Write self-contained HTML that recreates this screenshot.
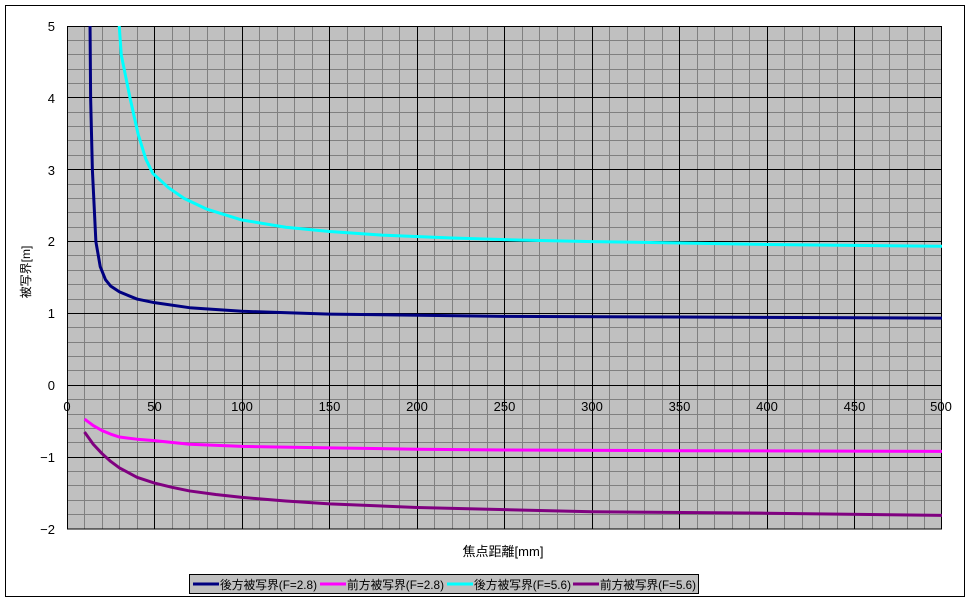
<!DOCTYPE html>
<html><head><meta charset="utf-8"><style>
html,body{margin:0;padding:0;background:#fff;width:970px;height:604px;overflow:hidden}
svg{display:block;font-family:"Liberation Sans","Noto Sans CJK JP",sans-serif}
</style></head><body>
<svg width="970" height="604" viewBox="0 0 970 604" xmlns="http://www.w3.org/2000/svg">
<defs>
<clipPath id="cp"><rect x="67" y="26" width="875" height="503"/></clipPath>
</defs>
<rect x="5.5" y="5.5" width="959" height="591" fill="#fff" stroke="#000" stroke-width="1"/>
<rect x="67" y="26" width="875" height="503" fill="#c0c0c0"/>
<g stroke="#808080" stroke-width="1" fill="none">
<path d="M84.5 26V529M102.5 26V529M119.5 26V529M137.5 26V529M172.5 26V529M189.5 26V529M207.5 26V529M224.5 26V529M259.5 26V529M277.5 26V529M294.5 26V529M312.5 26V529M347.5 26V529M364.5 26V529M382.5 26V529M399.5 26V529M434.5 26V529M452.5 26V529M469.5 26V529M487.5 26V529M522.5 26V529M539.5 26V529M557.5 26V529M574.5 26V529M609.5 26V529M627.5 26V529M644.5 26V529M662.5 26V529M697.5 26V529M714.5 26V529M732.5 26V529M749.5 26V529M784.5 26V529M802.5 26V529M819.5 26V529M837.5 26V529M872.5 26V529M889.5 26V529M907.5 26V529M924.5 26V529"/>
<path d="M67 40.5H942M67 54.5H942M67 69.5H942M67 83.5H942M67 112.5H942M67 126.5H942M67 140.5H942M67 155.5H942M67 184.5H942M67 198.5H942M67 212.5H942M67 227.5H942M67 255.5H942M67 270.5H942M67 284.5H942M67 299.5H942M67 327.5H942M67 342.5H942M67 356.5H942M67 370.5H942M67 399.5H942M67 414.5H942M67 428.5H942M67 442.5H942M67 471.5H942M67 485.5H942M67 500.5H942M67 514.5H942"/>
</g>
<g stroke="#000" stroke-width="1" fill="none">
<path d="M154.5 26V529M242.5 26V529M329.5 26V529M417.5 26V529M504.5 26V529M592.5 26V529M679.5 26V529M767.5 26V529M854.5 26V529"/>
<path d="M67 97.5H942M67 169.5H942M67 241.5H942M67 313.5H942M67 385.5H942M67 457.5H942"/>
<rect x="67.5" y="26.5" width="874" height="502.5"/>
</g>
<g clip-path="url(#cp)" fill="none" stroke-width="3" stroke-linejoin="round">
<g transform="translate(67,385.3) scale(1.75,-71.86)">
<polyline vector-effect="non-scaling-stroke" stroke="#000080" points="13,5.5 13.5,4 14.5,3 16.5,2 19,1.65 22,1.47 25,1.38 30,1.3 40,1.2 50,1.15 70,1.08 100,1.03 150,0.99 250,0.96 350,0.95 500,0.935"/>
<polyline vector-effect="non-scaling-stroke" stroke="#00ffff" points="29,5.3 31,4.6 36,4 40.6,3.5 45,3.15 49,2.95 58,2.75 67,2.6 80,2.45 100,2.3 125,2.2 150,2.14 180,2.09 220,2.05 260,2.02 300,2.0 400,1.96 500,1.935"/>
<polyline vector-effect="non-scaling-stroke" stroke="#ff00ff" points="10,-0.47 15,-0.56 20,-0.63 25,-0.68 30,-0.72 40,-0.75 50,-0.77 70,-0.82 100,-0.85 150,-0.87 200,-0.89 250,-0.9 350,-0.91 500,-0.92"/>
<polyline vector-effect="non-scaling-stroke" stroke="#800080" points="10,-0.65 15,-0.82 20,-0.95 25,-1.06 30,-1.15 40,-1.28 50,-1.36 60,-1.42 70,-1.47 85,-1.52 100,-1.56 125,-1.61 150,-1.65 200,-1.7 250,-1.73 300,-1.76 400,-1.78 500,-1.81"/>
</g>
</g>
<g font-size="13" fill="#000" text-anchor="end">
<text x="55" y="31">5</text><text x="55" y="103">4</text><text x="55" y="175">3</text><text x="55" y="246">2</text><text x="55" y="318">1</text><text x="55" y="390">0</text><text x="55" y="462">−1</text><text x="55" y="534">−2</text>
</g>
<g font-size="13" fill="#000" text-anchor="middle">
<text x="67" y="411">0</text><text x="154.5" y="411">50</text><text x="242" y="411">100</text><text x="329.5" y="411">150</text><text x="417" y="411">200</text><text x="504.5" y="411">250</text><text x="592" y="411">300</text><text x="679.5" y="411">350</text><text x="767" y="411">400</text><text x="854.5" y="411">450</text><text x="941" y="411">500</text>
<text x="503" y="556" font-size="13">焦点距離[mm]</text>
<text transform="translate(30,272) rotate(-90)" font-size="12">被写界[m]</text>
</g>
<rect x="189.5" y="574.5" width="509" height="19" fill="#c0c0c0" stroke="#000"/>
<g stroke-width="3">
<line x1="193" y1="584" x2="219" y2="584" stroke="#000080"/>
<line x1="320" y1="584" x2="346" y2="584" stroke="#ff00ff"/>
<line x1="447" y1="584" x2="473" y2="584" stroke="#00ffff"/>
<line x1="573" y1="584" x2="599" y2="584" stroke="#800080"/>
</g>
<g font-size="12" fill="#000">
<text x="220" y="589" textLength="97" lengthAdjust="spacingAndGlyphs">後方被写界(F=2.8)</text>
<text x="347" y="589" textLength="97" lengthAdjust="spacingAndGlyphs">前方被写界(F=2.8)</text>
<text x="474" y="589" textLength="97" lengthAdjust="spacingAndGlyphs">後方被写界(F=5.6)</text>
<text x="600" y="589" textLength="96" lengthAdjust="spacingAndGlyphs">前方被写界(F=5.6)</text>
</g>
</svg>
</body></html>
